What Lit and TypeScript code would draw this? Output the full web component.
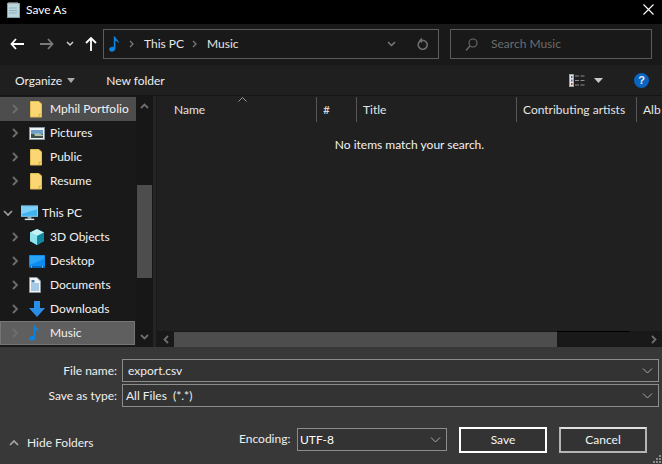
import { LitElement, html, css, svg } from "lit";
import { customElement } from "lit/decorators.js";

const chevR = html`<svg class="chev" width="8" height="10" viewBox="0 0 8 10"><path d="M2 1l4 4-4 4" fill="none" stroke="#6e6e6e" stroke-width="1.8"/></svg>`;
const chevD = html`<svg class="chev" width="10" height="8" viewBox="0 0 10 8"><path d="M1 2l4 4 4-4" fill="none" stroke="#a0a0a0" stroke-width="1.6"/></svg>`;
const folder = svg`<path d="M1.5 0.5H10l2.5 2.5v13H1.5z" fill="#fbd774" stroke="#e5bc55" stroke-width="1"/><path d="M10 16v-3h2.5" fill="#f3cb66" stroke="#d7ab46" stroke-width="0.8"/>`;
const note = (w: number, h: number) => html`<svg width=${w} height=${h} viewBox="0 0 12 18"><path d="M5.2 0.5h1.6c.3 3 4.7 4 4.2 8.5-.3-2-2-3.2-4-3.7V14c0 2.2-2 3.6-4 3.6S0 16.500 0 15c0-2 2.600-3.300 5.200-2.800z" fill="#0a84e0"/></svg>`;

const icons: Record<string, unknown> = {
  folder: html`<svg width="14" height="17" viewBox="0 0 14 17">${folder}</svg>`,
  pictures: html`<svg width="16" height="13" viewBox="0 0 16 13"><rect x=".5" y=".5" width="15" height="12" fill="#eef2f6" stroke="#8a929a"/><rect x="2" y="3" width="12" height="4" fill="#6d9fc6"/><rect x="2" y="7" width="12" height="4" fill="#3d4f48"/><path d="M5 7l4-1 5 2v1H6z" fill="#a9c0b0"/></svg>`,
  pc: html`<svg width="17" height="16" viewBox="0 0 18 16"><rect x=".5" y=".5" width="17" height="11" fill="#3fb2f2" stroke="#8fd2f6"/><path d="M1 1h16v3L1 9z" fill="#7fd0f8"/><rect x="7" y="12" width="4" height="2" fill="#9ab0c0"/><rect x="4" y="14" width="10" height="1.500" fill="#dfe7ee"/></svg>`,
  cube: html`<svg width="16" height="16" viewBox="0 0 16 16"><path d="M8 0l7 3.500v8.500L8 16 1 12V3.500z" fill="#35c5d8"/><path d="M8 0l7 3.500L8 7 1 3.500z" fill="#c4f2f6"/><path d="M1 3.500L8 7v9l-7-4z" fill="#8de4ec"/><path d="M15 3.500L8 7v9l7-4z" fill="#10879f"/></svg>`,
  desktop: html`<svg width="16" height="13" viewBox="0 0 16 13"><rect width="16" height="13" rx=".5" fill="#0a8cf0"/><rect y="11" width="16" height="2" fill="#0767b8"/><path d="M2 11.800h1M13 11.800h1" stroke="#cfe8fb"/><path d="M1 1h14v3L1 10z" fill="#2aa2f5"/></svg>`,
  docs: html`<svg width="12" height="16" viewBox="0 0 12 16"><path d="M.5.500H8L11.500 4v11.500H.5z" fill="#f0f3f6" stroke="#8c949c"/><path d="M2 7h8M2 9h8M2 11h8M2 13h8" stroke="#5aa0d0"/><path d="M2.500 3h3v2.500h-3z" fill="#4f7fa8"/></svg>`,
  down: html`<svg width="16" height="16" viewBox="0 0 16 16"><path d="M5 0h6v7h5l-8 9-8-9h5z" fill="#2b8ee6"/></svg>`,
  music: note(11, 16),
};

interface Row { label: string; icon: string; cls?: string; open?: boolean }

const rows: Row[] = [
  { label: "Mphil Portfolio", icon: "folder", cls: "hover" },
  { label: "Pictures", icon: "pictures" },
  { label: "Public", icon: "folder" },
  { label: "Resume", icon: "folder", cls: "gap" },
  { label: "This PC", icon: "pc", open: true, cls: "top" },
  { label: "3D Objects", icon: "cube" },
  { label: "Desktop", icon: "desktop" },
  { label: "Documents", icon: "docs" },
  { label: "Downloads", icon: "down" },
  { label: "Music", icon: "music", cls: "selected" },
];

const columns = [
  { label: "Name", w: 160 },
  { label: "#", w: 40 },
  { label: "Title", w: 160 },
  { label: "Contributing artists", w: 120 },
  { label: "Alb", w: 26 },
];

const small = html`<svg width="11" height="6" viewBox="0 0 11 6"><path d="M1 .5l4.500 4.500L10 .5" fill="none" stroke="#a8a8a8" stroke-width="1"/></svg>`;

@customElement("app-root")
export class AppRoot extends LitElement {
  static styles = css`
    :host { display: block; width: 662px; height: 464px; overflow: hidden; position: relative; background: #383838; color: #fff;
      font-family: "Lato", "Noto Sans", sans-serif; font-size: 12px; line-height: 16px; }
    * { box-sizing: border-box; }
    .title { height: 24px; background: #000; display: flex; align-items: center; padding: 0 8px 5px 6px; gap: 5px; }
    .title .t { flex: 1; }
    .nav { height: 41px; background: #191919; display: flex; align-items: flex-start; padding-top: 5px; position: relative; }
    .navbtns { width: 103px; height: 29px; display: flex; align-items: center; padding-left: 10px; }
    .navbtns svg { display: block; }
    .forward { margin-left: 16px; }
    .recent { margin-left: 12px; }
    .up { margin-left: 11px; }
    .addr { width: 336px; height: 30px; border: 1px solid #5c5c5c; display: flex; align-items: center; padding-left: 5px; color: #e6e6e6; }
    .addr .sep1 { margin-left: 9px; }
    .addr .crumb { margin: 0 8px 0 9px; }
    .addr .sp { flex: 1; }
    .addr .right { display: flex; align-items: center; gap: 21px; padding-right: 10px; }
    .search { margin-left: 11px; width: 202px; height: 30px; border: 1px solid #5c5c5c; display: flex; align-items: center; padding-left: 14px; gap: 13px; color: #6c6c6c; }
    .toolbar { height: 31px; background: #1f1f1f; display: flex; align-items: center; padding: 1px 0 0 15px; color: #eee; border-bottom: 1px solid #151515; }
    .caret { margin-left: 5px; }
    .nf { margin-left: 31px; }
    .toolbar .sp { flex: 1; }
    .viewcaret { margin-left: 9px; }
    .help { width: 15px; height: 15px; border-radius: 50%; background: #0a64c0; font: bold 11px/15px "Liberation Sans", sans-serif; text-align: center; margin: 0 13px 0 31px; }
    .main { height: 251px; display: flex; }
    .side { width: 136px; background: #191919; padding-top: 1px; flex: none; }
    .row { height: 24px; display: flex; align-items: center; white-space: nowrap; color: #f2f2f2; }
    .row.hover { background: #4d4d4d; }
    .row.selected { background: #5f5f5f; border: 1px solid #757575; margin-right: 1px; }
    .row.selected .cw { margin-left: 0; }
    .row.gap { margin-bottom: 8px; }
    .cw { width: 28px; display: flex; justify-content: center; margin-left: 1px; }
    .row.top .cw { width: 15px; margin-left: 0; }
    .ic { width: 21px; display: flex; justify-content: flex-start; flex: none; }
    .row.top .ic { width: 27px; padding-left: 6px; }
    .vs { width: 17px; background: #171717; display: flex; flex-direction: column; align-items: center; flex: none; }
    .vs .ar { height: 20px; display: flex; align-items: center; justify-content: center; }
    .vs .thumb { width: 15px; height: 93px; background: #4d4d4d; margin-top: 69px; }
    .vs .sp { flex: 1; }
    .split { width: 4px; background: #252525; flex: none; border-right: 1px solid #1a1a1a; }
    .list { flex: 1; background: #202020; display: flex; flex-direction: column; min-width: 0; }
    .head { height: 26px; display: flex; margin-top: 1px; white-space: nowrap; color: #e4e4e4; overflow: hidden; flex: none; }
    .col { flex: none; border-right: 1px solid #575757; padding: 5px 0 0 6px; height: 25px; }
    .col:first-child { padding-left: 17px; position: relative; }
    .col:last-child { border-right: none; }
    .sort { position: absolute; left: 81px; top: 0; }
    .empty { flex: 1; text-align: center; padding: 14px 0 0 45px; width: 460px; color: #f2f2f2; }
    .hs { height: 16px; display: flex; background: #191919; align-items: stretch; flex: none; }
    .hs .ar { width: 17px; display: flex; align-items: center; justify-content: center; flex: none; }
    .hs .thumb { width: 383px; background: #4d4d4d; margin-top: 1px; }
    .hs .sp { flex: 1; border-top: 1px solid #000; margin-right: 15px; }
    .bottom { height: 117px; background: #383838; padding: 12px 3px 0 0; position: relative; }
    .form { display: grid; grid-template-columns: 122px 1fr; row-gap: 2px; align-items: center; }
    .lbl { text-align: right; padding-right: 5px; color: #f0f0f0; }
    .field { height: 23px; border: 1px solid #8c8c8c; background: #333; display: flex; align-items: center; padding-right: 5px; color: #eee; }
    .field span { flex: 1; }
    .fn span { padding-left: 5px; }
    .ty span { padding-left: 3px; }
    .foot { display: flex; align-items: flex-start; margin-top: 20px; }
    .hide { display: flex; align-items: center; gap: 8px; margin: 8px 0 0 9px; width: 230px; color: #eee; }
    .enc { margin: 4px 5px 0 0; color: #eee; width: 53px; }
    .sel { width: 150px; height: 23px; border: 1px solid #8c8c8c; background: #333; display: flex; align-items: center; padding: 0 5px 0 2px; margin-top: 1px; }
    .sel span { flex: 1; }
    .btn { width: 88px; height: 26px; border: 2px solid #fff; background: #333; display: flex; align-items: center; justify-content: center; color: #f4f4f4; margin-left: 12px; }
    .btn.cancel { border-color: #b4b4b4; border-top-color: #e0e0e0; }
    .grip { position: absolute; right: 1px; bottom: 1px; }
  `;

  render() {
    return html`
      <div class="title">
        <svg width="15" height="16" viewBox="0 0 15 16"><rect x="1.500" y="1.500" width="12" height="14" fill="#b9d6dc" stroke="#7da0a8"/><path d="M3 0v3M5 0v3M7 0v3M9 0v3M11 0v3" stroke="#c8c8c8"/><path d="M3 6h8M3 8.500h8M3 11h8" stroke="#8cb0b8"/></svg>
        <span class="t">Save As</span>
        <svg width="11" height="11" viewBox="0 0 11 11"><path d="M.5.500l10 10M10.500.500l-10 10" stroke="#fff" stroke-width="1.100"/></svg>
      </div>
      <div class="nav">
        <div class="navbtns">
          <svg width="14" height="12" viewBox="0 0 14 12"><path d="M6 1L1.500 6 6 11M2 6h12" fill="none" stroke="#fff" stroke-width="1.800"/></svg>
          <svg class="forward" width="14" height="12" viewBox="0 0 14 12"><path d="M8 1l4.500 5L8 11M12 6H0" fill="none" stroke="#7a7a7a" stroke-width="1.800"/></svg>
          <svg class="recent" width="8" height="6" viewBox="0 0 8 6"><path d="M1 1l3 3 3-3" fill="none" stroke="#cfcfcf" stroke-width="1.500"/></svg>
          <svg class="up" width="12" height="14" viewBox="0 0 12 14"><path d="M1 6l5-5 5 5M6 1.500V14" fill="none" stroke="#fff" stroke-width="1.800"/></svg>
        </div>
        <div class="addr">
          ${note(11, 16)}
          <svg class="sep1" width="6" height="8" viewBox="0 0 6 8"><path d="M1 1l3 3-3 3" fill="none" stroke="#7a7a7a" stroke-width="1.300"/></svg>
          <span class="crumb">This PC</span>
          <svg width="6" height="8" viewBox="0 0 6 8"><path d="M1 1l3 3-3 3" fill="none" stroke="#7a7a7a" stroke-width="1.300"/></svg>
          <span class="crumb">Music</span>
          <span class="sp"></span>
          <div class="right">
            <svg width="9" height="6" viewBox="0 0 9 6"><path d="M1 1l3.500 3.500L8 1" fill="none" stroke="#7a7a7a" stroke-width="1.500"/></svg>
            <svg width="11" height="12" viewBox="0 0 11 12"><path d="M3 3.200A4.500 4.500 0 1 0 7 2.500H3.500M5 .5L3 2.500l2 2" fill="none" stroke="#6e6e6e" stroke-width="1.600"/></svg>
          </div>
        </div>
        <div class="search">
          <svg width="13" height="13" viewBox="0 0 13 13"><circle cx="8" cy="5" r="4" fill="none" stroke="#6c6c6c" stroke-width="1.100"/><path d="M5 8l-4 4.500" stroke="#6c6c6c" stroke-width="1.200"/></svg>
          <span>Search Music</span>
        </div>
      </div>
      <div class="toolbar">
        <span>Organize</span>
        <svg class="caret" width="8" height="5" viewBox="0 0 8 5"><path d="M0 0h8L4 5z" fill="#a8a8a8"/></svg>
        <span class="nf">New folder</span>
        <span class="sp"></span>
        <svg width="16" height="13" viewBox="0 0 16 13"><rect x=".5" y=".5" width="4" height="12" fill="#e8e8e8" stroke="#a0a0a0"/><rect x="2" y="2" width="1.500" height="2" fill="#3a66c0"/><rect x="2" y="5.500" width="1.500" height="2" fill="#3a66c0"/><rect x="2" y="9" width="1.500" height="2" fill="#c03a3a"/><path d="M6 2h4M11.500 2h4M6 6.500h4M11.500 6.500h4M6 11h4M11.500 11h4" stroke="#8c8c8c"/></svg>
        <svg class="viewcaret" width="9" height="5" viewBox="0 0 9 5"><path d="M0 0h9L4.500 5z" fill="#c8c8c8"/></svg>
        <div class="help">?</div>
      </div>
      <div class="main">
        <div class="side">
          ${rows.map(r => html`
            <div class="row ${r.cls ?? ""}">
              <span class="cw">${r.open ? chevD : chevR}</span>
              <span class="ic">${icons[r.icon]}</span>
              <span>${r.label}</span>
            </div>`)}
        </div>
        <div class="vs">
          <div class="ar"><svg width="9" height="6" viewBox="0 0 9 6"><path d="M1 5l3.500-3.500L8 5" fill="none" stroke="#6e6e6e" stroke-width="1.800"/></svg></div>
          <div class="thumb"></div>
          <span class="sp"></span>
          <div class="ar"><svg width="9" height="6" viewBox="0 0 9 6"><path d="M1 1l3.500 3.500L8 1" fill="none" stroke="#6e6e6e" stroke-width="1.800"/></svg></div>
        </div>
        <div class="split"></div>
        <div class="list">
          <div class="head">
            ${columns.map((c, i) => html`<div class="col" style="width:${c.w}px">${c.label}${i === 0 ? html`<svg class="sort" width="9" height="5" viewBox="0 0 9 5"><path d="M.5 4.500l4-4 4 4" fill="none" stroke="#9a9a9a"/></svg>` : ""}</div>`)}
          </div>
          <div class="empty">No items match your search.</div>
          <div class="hs">
            <div class="ar"><svg width="6" height="9" viewBox="0 0 6 9"><path d="M5 1L1.500 4.500 5 8" fill="none" stroke="#6e6e6e" stroke-width="1.800"/></svg></div>
            <div class="thumb"></div>
            <span class="sp"></span>
            <div class="ar"><svg width="6" height="9" viewBox="0 0 6 9"><path d="M1 1l3.500 3.500L1 8" fill="none" stroke="#6e6e6e" stroke-width="1.800"/></svg></div>
          </div>
        </div>
      </div>
      <div class="bottom">
        <div class="form">
          <div class="lbl">File name:</div>
          <div class="field fn"><span>export.csv</span>${small}</div>
          <div class="lbl">Save as type:</div>
          <div class="field ty"><span>All Files&nbsp; (*.*)</span>${small}</div>
        </div>
        <div class="foot">
          <div class="hide">
            <svg width="10" height="6" viewBox="0 0 10 6"><path d="M1 5l4-4 4 4" fill="none" stroke="#a8a8a8" stroke-width="1.700"/></svg>
            <span>Hide Folders</span>
          </div>
          <div class="enc">Encoding:</div>
          <div class="sel"><span>UTF-8</span>${small}</div>
          <div class="btn">Save</div>
          <div class="btn cancel">Cancel</div>
        </div>
        <svg class="grip" width="8" height="8" viewBox="0 0 8 8"><path d="M6 0h2v2H6zM3 3h2v2H3zM6 3h2v2H6zM0 6h2v2H0zM3 6h2v2H3zM6 6h2v2H6z" fill="#8a8a8a"/></svg>
      </div>
    `;
  }
}
